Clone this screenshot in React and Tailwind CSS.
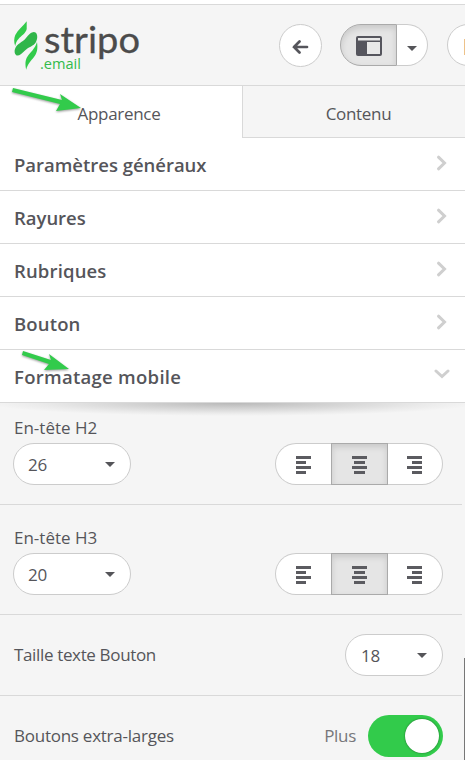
const sections = [
  { label: 'Paramètres généraux', tracking: 'tracking-[-0.02px]' },
  { label: 'Rayures', tracking: 'tracking-[-0.02px]' },
  { label: 'Rubriques', tracking: 'tracking-[0.15px]' },
  { label: 'Bouton', tracking: 'tracking-[0.15px]' },
  { label: 'Formatage mobile', tracking: 'tracking-[0.28px]', open: true },
];

function Caret() {
  return (
    <svg width="10" height="5" viewBox="0 0 10 5" className="shrink-0">
      <path d="M0 0H10L5 5Z" fill="#555559" />
    </svg>
  );
}

function Chevron({ open }) {
  return open ? (
    <svg width="16" height="10" viewBox="0 0 16 10" className="mb-[7px]">
      <path d="M2 2L8 7.5L14 2" fill="none" stroke="#cfcfcf" strokeWidth="3" strokeLinecap="round" />
    </svg>
  ) : (
    <svg width="11" height="16" viewBox="0 0 11 16" className="mr-[3px] mb-[5px]">
      <path d="M2.5 2.2L8.5 8L2.5 13.8" fill="none" stroke="#cfcfcf" strokeWidth="3" strokeLinecap="round" />
    </svg>
  );
}

function Logo() {
  return (
    <svg width="130" height="56" viewBox="0 0 130 56" className="shrink-0 overflow-visible">
      <path d="M12.7 0.3V8C12 12 7 15 4.5 18C2.5 20 1.8 22 1.2 25C-0.3 21 0 17 1.3 14C4 9 9 5 12.7 0.3Z" fill="#32cb4b" />
      <path d="M23 21C24 28 23 32 20 36C17 40 13.5 43 12.2 48.8C11 43 11.2 39 13.5 35.5C16 31.5 21 28 23 21Z" fill="#32cb4b" />
      <path d="M1 28C3 22 8 22 12 17C15 13 19 9.5 21.5 11.5C24 13.5 23.5 18 22 21C19.5 25.5 15 25.5 11 29.5C8 32.5 4 36 2 34C0.4 32.5 0.3 30 1 28Z" fill="#30b64a" />
      <text x="30" y="31.5" textLength="96" lengthAdjust="spacingAndGlyphs" fill="#4b4b4b" stroke="#4b4b4b" strokeWidth="0.3" strokeLinejoin="round" fontSize="36" fontFamily="Lato, sans-serif">stripo</text>
      <text x="26" y="48" textLength="41" lengthAdjust="spacingAndGlyphs" fill="#32bb4a" fontSize="14" fontFamily="'Open Sans', sans-serif">.email</text>
    </svg>
  );
}

function Header() {
  return (
    <header className="flex h-[82px] items-start border-y border-[#d9d9d9] bg-[#f5f5f5] pl-[14px]">
      <div className="mt-4 w-[265px] shrink-0"><Logo /></div>
      <button className="mt-[19px] flex size-[43px] shrink-0 items-center justify-center rounded-full border border-[#cccccc] bg-white">
        <svg width="18" height="14" viewBox="0 0 18 14" className="mr-0.5 mt-0.5">
          <path d="M8.5 1.5L3 7L8.5 12.5M3 7H16" fill="none" stroke="#55555b" strokeWidth="2.7" strokeLinecap="round" />
        </svg>
      </button>
      <div className="ml-[18px] mt-[19px] flex h-[42px] w-[88px] shrink-0">
        <button className="flex w-[57px] items-center justify-center rounded-l-full border border-[#aaaaaa] bg-[#e5e5e5] shadow-[inset_0_3px_6px_rgba(0,0,0,0.13)]">
          <svg width="26" height="20" viewBox="0 0 26 20" className="mt-[1px]">
            <rect width="26" height="20" rx="2" fill="#55555d" />
            <path d="M2 2H24V4.5H2ZM11 6H24V18H11Z" fill="#e8e8e8" />
          </svg>
        </button>
        <button className="flex w-[31px] items-center justify-center rounded-r-full border border-l-0 border-[#cccccc] bg-white pt-[6px]"><Caret /></button>
      </div>
      <button className="ml-[19px] mt-[19px] flex h-[42px] w-[60px] shrink-0 items-center rounded-l-full border border-[#cccccc] bg-white pl-4">
        <span className="mt-[3px] h-4 w-5 bg-[#edc28a]" />
      </button>
    </header>
  );
}

function Select({ value, narrow }) {
  return (
    <div className={`flex h-[42px] items-center justify-between rounded-full border border-[#cccccc] bg-white pr-[15px] ${narrow ? 'w-[98px] pl-[15px]' : 'w-[118px] pl-[14px]'}`}>
      <span className="pt-[2px] tracking-[-0.3px]">{value}</span>
      <Caret />
    </div>
  );
}

function AlignIcon({ align }) {
  const x = { left: 0, center: 2, right: 5 }[align];
  return (
    <svg width="15" height="18" viewBox="0 0 15 18" shapeRendering="crispEdges" className="mt-[2px]">
      <path d={`M0 0h15v3H0zM${x} 5h${align === 'center' ? 11 : 10}v3H${x}zM0 10h15v3H0zM${x} 15h${align === 'center' ? 11 : 10}v3H${x}z`} fill="#5b5b60" />
    </svg>
  );
}

function AlignGroup() {
  return (
    <div className="flex h-[42px] w-[168px]">
      <button className="flex w-14 items-center justify-center rounded-l-full border border-r-0 border-[#cccccc] bg-white"><AlignIcon align="left" /></button>
      <button className="flex w-[57px] items-center justify-center border border-[#aaaaaa] bg-[#e5e5e5] shadow-[inset_0_3px_6px_rgba(0,0,0,0.13)]"><AlignIcon align="center" /></button>
      <button className="flex w-[55px] items-center justify-center rounded-r-full border border-l-0 border-[#cccccc] bg-white pr-[2px]"><AlignIcon align="right" /></button>
    </div>
  );
}

function HeadingRow({ label, value, first }) {
  return (
    <div className={`mr-[3px] border-b border-[#d9d9d9] pr-[19px] ${first ? 'h-[102px] pt-[13px]' : 'h-[110px] pt-[21px]'}`}>
      <div className={`pl-[14px] leading-6 ${first ? 'h-[27px]' : 'h-[27px]'}`}>{label}</div>
      <div className="flex justify-between pl-[13px]">
        <Select value={value} />
        <AlignGroup />
      </div>
    </div>
  );
}

export default function App() {
  return (
    <div className="relative h-[760px] w-[465px] overflow-hidden bg-white pt-1 font-['Open_Sans',sans-serif] text-[17px] text-[#55555a]">
      <Header />
      <nav className="flex h-[52px]">
        <div className="flex w-[242px] items-center justify-center pr-1 pt-[3px] tracking-[-0.3px]">Apparence</div>
        <div className="flex flex-1 items-center justify-center border-b border-l border-[#d9d9d9] bg-[#f5f5f5] pt-[5px] pl-[9px] tracking-[-0.3px]">Contenu</div>
      </nav>
      {sections.map((s) => (
        <div key={s.label} className="flex h-[53px] items-center justify-between border-b border-[#d9d9d9] pl-[14px] pr-[15px] pt-[2px]">
          <span className={`text-[18.5px] font-[550] ${s.tracking}`}>{s.label}</span>
          <Chevron open={s.open} />
        </div>
      ))}
      <main className="relative h-[357px] bg-[#f5f5f5]">
        <div className="absolute inset-x-0 top-0 h-[14px] bg-[radial-gradient(ellipse_245px_13px_at_50%_0,#b8b8b8,#d2d2d2_40%,#eaeaea_78%,#f5f5f5_100%)]" />
        <div className="relative">
          <HeadingRow label="En-tête H2" value="26" first />
          <HeadingRow label="En-tête H3" value="20" />
          <div className="mr-[3px] flex h-[81px] items-center justify-between border-b border-[#d9d9d9] pl-[14px] pr-[19px]">
            <span className="tracking-[-0.35px]">Taille texte Bouton</span>
            <Select value="18" narrow />
          </div>
          <div className="mr-[3px] flex h-20 items-center pl-[14px] pr-[19px]">
            <span className="flex-1 tracking-[-0.25px]">Boutons extra-larges</span>
            <span className="mr-3 tracking-[-0.3px] text-[#77777a]">Plus</span>
            <div className="flex h-[42px] w-[75px] items-center justify-end rounded-full bg-[#32cb4b] pr-1">
              <span className="size-[34px] rounded-full bg-white shadow-[0_0_2px_rgba(0,0,0,0.5)]" />
            </div>
          </div>
        </div>
        <div className="absolute right-0 top-[255px] h-[110px] w-px bg-[#777777]" />
      </main>
      <svg width="200" height="400" viewBox="0 0 200 400" className="pointer-events-none absolute left-0 top-0 drop-shadow-[0_1px_1px_rgba(0,0,0,0.4)]">
        <path d="M13 88L62 100L60 94L81 108L56 111L60 104L12 92Z" fill="#32cb4b" />
        <path d="M23 351L51 360L49 354L69 369L44 370L49 364L22 355Z" fill="#32cb4b" />
      </svg>
    </div>
  );
}
